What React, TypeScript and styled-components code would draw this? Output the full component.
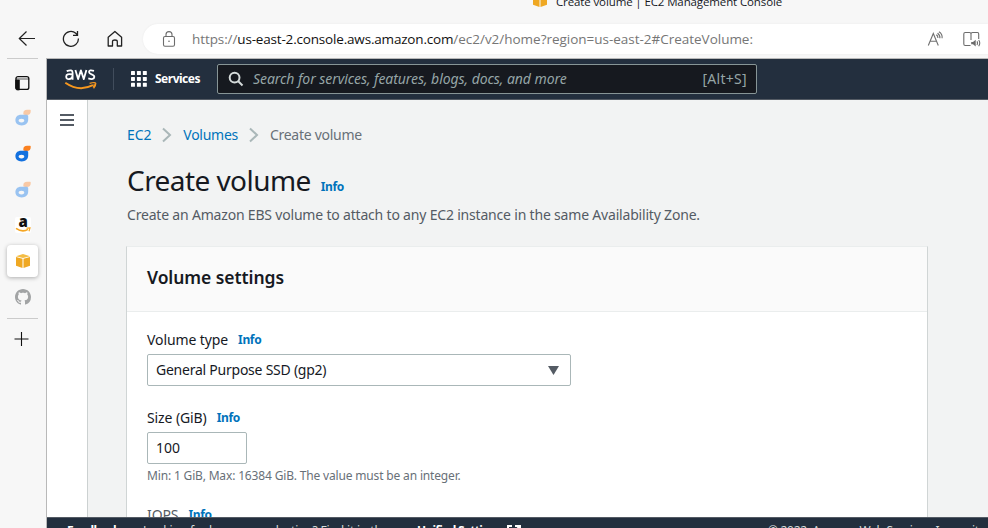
import React from 'react';
import styled, { createGlobalStyle } from 'styled-components';

const Global = createGlobalStyle`
  * { box-sizing: border-box; }
  html, body { margin: 0; padding: 0; overflow: hidden; }
  body { background: #f7f7f7; font-family: 'Noto Sans', 'Open Sans', sans-serif; }
  svg { display: block; flex: none; }
`;

const Window = styled.div`
  width: 988px;
  height: 528px;
  overflow: hidden;
  display: grid;
  grid-template-rows: 24px 34px 470px;
  background: #f7f7f7;
`;

const Txt = styled.span<{ $size?: number; $ls?: number; $color?: string; $weight?: number; $italic?: boolean; $font?: string }>`
  display: block;
  white-space: nowrap;
  font-size: ${p => p.$size ?? 14}px;
  letter-spacing: ${p => p.$ls ?? 0}px;
  color: ${p => p.$color ?? '#16191f'};
  font-weight: ${p => p.$weight ?? 400};
  font-style: ${p => (p.$italic ? 'italic' : 'normal')};
  font-family: ${p => (p.$font ? `'${p.$font}', sans-serif` : 'inherit')};
  line-height: 20px;
`;

const TabStrip = styled.div`
  display: flex;
  align-items: flex-start;
  gap: 8px;
  padding-left: 532px;
  overflow: hidden;
  & > svg { margin-top: -8px; }
  & > span { margin-top: -8px; }
`;

const Toolbar = styled.div`
  display: grid;
  grid-template-columns: 143px 845px;
`;

const NavButtons = styled.div`
  display: flex;
  gap: 26px;
  padding: 6px 0 0 18px;
`;

const AddressBar = styled.div`
  display: flex;
  align-items: center;
  height: 30px;
  padding-left: 19px;
  border-radius: 15px 0 0 15px;
  background: #fff;
  box-shadow: 0 0 2px #e8e8e8;
`;

const Url = styled.div`
  display: flex;
  margin-left: 16px;
  width: 735px;
`;

const ReaderIcons = styled.div`
  display: flex;
  gap: 19px;
`;

const Body = styled.div`
  display: grid;
  grid-template-columns: 46px 942px;
`;

const VerticalTabs = styled.div`
  display: flex;
  flex-direction: column;
  align-items: center;
`;

const Divider = styled.div<{ $mt?: number }>`
  width: 31px;
  height: 1px;
  flex: none;
  margin: ${p => p.$mt ?? 0}px 1px 0 0;
  background: #cbcbcb;
`;

const TabCell = styled.div<{ $active?: boolean; $h?: number; $mt?: number }>`
  width: 31px;
  height: ${p => p.$h ?? 32}px;
  margin: ${p => p.$mt ?? 2}px 1px 2px 0;
  display: flex;
  flex: none;
  align-items: center;
  justify-content: center;
  border-radius: 4px;
  background: ${p => (p.$active ? '#fff' : 'transparent')};
  box-shadow: ${p => (p.$active ? '0 1px 4px rgba(0,0,0,.3)' : 'none')};
`;

const Page = styled.div`
  display: grid;
  grid-template-rows: 41px 417px 11px;
  border-left: 1px solid #b9b9b9;
  border-top: 1px solid #b9b9b9;
  height: 470px;
  overflow: hidden;
`;

const AwsHeader = styled.div`
  display: flex;
  align-items: center;
  padding-left: 17px;
  background: #232f3e;
  border-bottom: 1px solid #545b64;
`;

const HeaderRule = styled.div`
  width: 1px;
  height: 22px;
  margin: 0 17px 0 15px;
  background: #414d5c;
`;

const Services = styled.div`
  display: flex;
  align-items: center;
  gap: 8px;
  width: 86px;
`;

const SearchBox = styled.div`
  display: flex;
  align-items: center;
  width: 540px;
  height: 30px;
  padding: 0 9px 0 10px;
  border: 1px solid #879596;
  border-radius: 2px;
  background: #16191f;
  & > svg { margin-right: 9px; }
  & > span:last-child { margin-left: auto; }
`;

const Main = styled.div`
  display: grid;
  grid-template-columns: 41px 900px;
  background: #f2f3f3;
  overflow: hidden;
`;

const Rail = styled.div`
  background: #fff;
  border-right: 1px solid #ccd1d1;
  padding: 14px 0 0 13px;
`;

const Content = styled.div`
  padding: 25px 0 0 39px;
`;

const Crumbs = styled.div`
  display: flex;
  align-items: center;
  height: 20px;
  & > svg { margin: 0 11px; }
`;

const TitleRow = styled.div`
  display: flex;
  align-items: baseline;
  gap: 10px;
  height: 36px;
  margin-top: 17px;
  & > span:first-child { line-height: 36px; }
`;

const Description = styled.div`
  margin-top: 7px;
`;

const Panel = styled.section`
  width: 802px;
  height: 330px;
  margin-top: 21px;
  margin-left: -1px;
  border: 1px solid #d0d5d5;
  border-top-color: #eaeded;
  background: #fff;
`;

const PanelHeader = styled.div`
  display: flex;
  align-items: center;
  height: 65px;
  padding: 0 20px 4px;
  background: #fafafa;
  border-bottom: 1px solid #eaeded;
`;

const Form = styled.div`
  padding: 18px 20px 0;
`;

const Label = styled.div`
  display: flex;
  align-items: center;
  gap: 10px;
  height: 20px;
`;

const Control = styled.div<{ $w: number }>`
  display: flex;
  align-items: center;
  justify-content: space-between;
  width: ${p => p.$w}px;
  height: 32px;
  margin: 4px 0 2px;
  padding: 0 11px 0 8px;
  border: 1px solid #aab7b8;
  border-radius: 2px;
  background: #fff;
`;

const Field = styled.div<{ $gap: number }>`
  margin-bottom: ${p => p.$gap}px;
`;

const Footer = styled.div`
  display: flex;
  background: #232f3e;
  border-top: 1px solid #545b64;
  overflow: hidden;
  padding: 3px 0 0 20px;
  & > svg { margin-top: 4px; }
`;

const FooterItem = styled.div<{ $w: number }>`
  width: ${p => p.$w}px;
  flex: none;
`;

const LINK = '#0073bb';
const Info = () => <Txt $size={12} $weight={700} $color={LINK} $ls={-0.35}>Info</Txt>;

const Cube = ({ size = 16 }: { size?: number }) => (
  <svg width={size} height={size} viewBox="0 0 16 16">
    <path d="M8 1 15 3.2 8 5 1 3.2Z" fill="#f4bd45" />
    <path d="M1 4.1 7.5 5.7V15L1 12.8ZM15 4.1 8.5 5.7V15L15 12.8Z" fill="#efa823" />
  </svg>
);

const Drop = ({ faded = false }: { faded?: boolean }) => (
  <svg width="16" height="17" viewBox="0 0 16 17">
    <path d="M8.3 4.8C8.3 1.8 9.6.8 12 .8H15.2L15.8 1.4C15.8 4.6 14.6 6 11.8 6 9.6 6 8.3 6 8.3 4.8Z" fill={faded ? '#f9c9a5' : '#fb8120'} />
    <path fillRule="evenodd" d="M6 5.8H12.2L13.2 6.8V10.6C13.2 14.2 10.6 16.4 6.7 16.4 2.9 16.4.4 14.3.4 11.2.4 8 2.6 5.8 6 5.8ZM6.5 9.7C4.5 9.7 3.6 10.7 3.6 11.6S4.5 13.4 6.5 13.4 9.3 12.6 9.3 11.6 8.5 9.7 6.5 9.7Z" fill={faded ? '#99c3f1' : '#1371df'} />
  </svg>
);

const Chevron = () => (
  <svg width="10" height="16" viewBox="0 0 10 16" fill="none" stroke="#aab7b8" strokeWidth="2">
    <path d="M1 1.5 8 8 1 14.5" />
  </svg>
);

const BackIcon = () => (
  <svg width="18" height="18" viewBox="0 0 18 18" fill="none" stroke="#222" strokeWidth="1.2">
    <path d="M17 8.5H1.5M8.5 1.5 1.3 8.5 8.5 15.5" />
  </svg>
);

const ReloadIcon = () => (
  <svg width="18" height="18" viewBox="0 0 18 18" fill="none" stroke="#222" strokeWidth="1.3">
    <path d="M16.4 8.5A7.5 7.5 0 1 1 13.8 3.2L15.5 5M15.5 1V5.3H11" />
  </svg>
);

const HomeIcon = () => (
  <svg width="17" height="18" viewBox="0 0 17 18" fill="none" stroke="#222" strokeWidth="1.3" strokeLinejoin="round">
    <path d="M2.2 7.3 8.9 1.5 15.6 7.3V16H11.3V11.5Q11.3 10 8.9 10T6.5 11.5V16H2.2Z" />
  </svg>
);

const LockIcon = () => (
  <svg width="14" height="18" viewBox="0 0 14 18" fill="none" stroke="#6c6c6c" strokeWidth="1.1">
    <rect x="1.5" y="6.5" width="11" height="9.8" rx="1.5" />
    <path d="M4 6.5V4.6Q4 1.6 7 1.6T10 4.6V6.5" />
    <circle cx="7" cy="11.3" r=".8" fill="#6c6c6c" stroke="none" />
  </svg>
);

const ReadAloudIcon = () => (
  <svg width="17" height="16" viewBox="0 0 17 16" fill="none" stroke="#707070" strokeWidth="1.1">
    <path d="M1.3 14.5 6.3 2.5 11.3 14.5M3.2 10.3H9.4M9.3 3.8Q11.1 5 10.9 7M10.5 2.2Q13.3 4 12.9 7.2M11.9.8Q15.6 3 15.1 7.2" />
  </svg>
);

const ReaderIcon = () => (
  <svg width="18" height="17" viewBox="0 0 18 17" fill="none" stroke="#6c6c6c" strokeWidth="1.1">
    <path d="M7.5 14.5H2.2Q.8 14.5.8 13V3Q.8 1.5 2.2 1.5H6.5Q8 1.5 8 3V9M8 3Q8 1.5 9.5 1.5H14.5Q15.7 1.5 15.7 3V8" />
    <path d="M8.2 11H10L12.7 8.8V15.5L10 13.3H8.2Z" fill="#6c6c6c" stroke="none" />
    <path d="M14 10.4Q15 12 14 13.9M15.7 9Q17.8 12 15.7 15.2" />
  </svg>
);

const AwsLogo = () => (
  <svg width="34" height="28" viewBox="0 0 34 28" fill="none">
    <g stroke="#fff" strokeWidth="1.8" strokeLinejoin="round">
      <path d="M2.7 6.2Q8.6 3.8 8.6 7.7V14.8M8.4 9.5Q2.2 8.4 2.2 11.6 2.3 14.4 5 14.2 8 13.8 8.6 11" />
      <path d="M11.4 4.9 14.1 14.1 16.9 5.4 19.8 14.1 22.4 4.9" />
      <path d="M30 5.8Q25 4.4 25 7.1C25 9.9 30.3 8.9 30.3 11.8Q30 15.2 24.3 13.4" />
    </g>
    <path d="M1.3 17.8Q15 27.2 29 20.2" stroke="#f7981f" strokeWidth="2" />
    <path d="M25.6 18.4Q31 16.8 31.8 18.2 32 20.5 29.6 23.4M29.2 22.6Q30.4 20.3 30.2 18.6" stroke="#f7981f" strokeWidth="1.2" />
  </svg>
);

const GridIcon = () => (
  <svg width="16" height="16" viewBox="0 0 17 17" fill="#fff">
    {[0, 6.3, 12.6].map(y => [0, 6.3, 12.6].map(x => <rect key={`${x}-${y}`} x={x} y={y} width="4.2" height="4.2" rx=".6" />))}
  </svg>
);

const SearchIcon = () => (
  <svg width="16" height="16" viewBox="0 0 16 16" fill="none" stroke="#d5dbdb" strokeWidth="2">
    <circle cx="6.6" cy="6.6" r="4.9" />
    <path d="M10 10 14.5 14.5" />
  </svg>
);

const TabsIcon = () => (
  <svg width="16" height="16" viewBox="0 0 16 16">
    <rect x="1" y="1.6" width="12.8" height="12.8" rx="2" fill="none" stroke="#111" strokeWidth="1.3" />
    <path d="M.6 4H14.2M.6 5H4.4V15H2.4Q.6 15 .6 13Z" stroke="#111" strokeWidth=".7" fill="#111" />
  </svg>
);

const AmazonIcon = () => (
  <svg width="16" height="17" viewBox="0 0 16 17">
    <rect width="16" height="16" rx="2" fill="#fff" />
    <text x="3.5" y="10.2" fontFamily="Open Sans" fontWeight="800" fontSize="15" fill="#111">a</text>
    <path d="M1 11.3Q7.5 15.8 13 12.3" fill="none" stroke="#f5a623" strokeWidth="1.6" />
    <path d="M11.5 11.2 15 11 14 14.2" fill="none" stroke="#f5a623" strokeWidth="1.2" />
  </svg>
);

const GithubIcon = () => (
  <svg width="16" height="16" viewBox="0 0 16 16" fill="#a2a4a5">
    <path d="M8 0C3.58 0 0 3.58 0 8c0 3.54 2.29 6.53 5.47 7.59.4.07.55-.17.55-.38 0-.19-.01-.82-.01-1.49-2.01.37-2.53-.49-2.69-.94-.09-.23-.48-.94-.82-1.13-.28-.15-.68-.52-.01-.53.63-.01 1.08.58 1.23.82.72 1.21 1.87.87 2.33.66.07-.52.28-.87.51-1.07-1.78-.2-3.64-.89-3.64-3.95 0-.87.31-1.59.82-2.15-.08-.2-.36-1.02.08-2.12 0 0 .67-.21 2.2.82.64-.18 1.32-.27 2-.27s1.36.09 2 .27c1.53-1.04 2.2-.82 2.2-.82.44 1.1.16 1.92.08 2.12.51.56.82 1.27.82 2.15 0 3.07-1.87 3.75-3.65 3.95.29.25.54.73.54 1.48 0 1.07-.01 1.93-.01 2.2 0 .21.15.46.55.38A8.01 8.01 0 0 0 16 8c0-4.42-3.58-8-8-8Z" />
  </svg>
);

const PlusIcon = () => (
  <svg width="17" height="15" viewBox="0 0 17 15" stroke="#111" strokeWidth="1.1">
    <path d="M.5 7H14.5M7.5 0V14" />
  </svg>
);

const MenuIcon = () => (
  <svg width="14" height="12" viewBox="0 0 14 12" fill="#545b64">
    <path d="M0 0H14V2H0ZM0 5H14V7H0ZM0 10H14V12H0Z" />
  </svg>
);

const ExternalIcon = () => (
  <svg width="14" height="14" viewBox="0 0 14 14" fill="none" stroke="#fff" strokeWidth="2">
    <path d="M5 1H1V13H13V9M8 1H13V6M13 1 6 8" />
  </svg>
);

export default function App() {
  return (
    <>
      <Global />
      <Window>
        <TabStrip>
          <Cube />
          <Txt $size={11.5} $font="Open Sans" $ls={-0.12}>Create volume | EC2 Management Console</Txt>
        </TabStrip>
        <Toolbar>
          <NavButtons><BackIcon /><ReloadIcon /><HomeIcon /></NavButtons>
          <AddressBar>
            <LockIcon />
            <Url>
              <Txt $size={13.5} $ls={-0.09} $font="Open Sans" $color="#767676">https://</Txt>
              <Txt $size={13.5} $ls={-0.18} $font="Open Sans" $color="#111">us-east-2.console.aws.amazon.com</Txt>
              <Txt $size={13.5} $ls={-0.02} $font="Open Sans" $color="#767676">/ec2/v2/home?region=us-east-2#CreateVolume:</Txt>
            </Url>
            <ReaderIcons><ReadAloudIcon /><ReaderIcon /></ReaderIcons>
          </AddressBar>
        </Toolbar>
        <Body>
          <VerticalTabs>
            <Divider />
            <TabCell $h={28} $mt={10}><TabsIcon /></TabCell>
            <TabCell><Drop faded /></TabCell>
            <TabCell><Drop /></TabCell>
            <TabCell><Drop faded /></TabCell>
            <TabCell><AmazonIcon /></TabCell>
            <TabCell $active><Cube /></TabCell>
            <TabCell><GithubIcon /></TabCell>
            <Divider $mt={3} />
            <TabCell $h={36}><PlusIcon /></TabCell>
          </VerticalTabs>
          <Page>
            <AwsHeader>
              <AwsLogo />
              <HeaderRule />
              <Services>
                <GridIcon />
                <Txt $size={12} $weight={700} $ls={-0.5} $color="#fff">Services</Txt>
              </Services>
              <SearchBox>
                <SearchIcon />
                <Txt $italic $ls={-0.06} $color="#95a5a6">Search for services, features, blogs, docs, and more</Txt>
                <Txt $ls={0.3} $color="#95a5a6">[Alt+S]</Txt>
              </SearchBox>
            </AwsHeader>
            <Main>
              <Rail><MenuIcon /></Rail>
              <Content>
                <Crumbs>
                  <Txt $color={LINK} $ls={-0.1}>EC2</Txt>
                  <Chevron />
                  <Txt $color={LINK} $ls={-0.28}>Volumes</Txt>
                  <Chevron />
                  <Txt $color="#687078" $ls={-0.28}>Create volume</Txt>
                </Crumbs>
                <TitleRow><Txt $size={28} $ls={-0.56}>Create volume</Txt><Info /></TitleRow>
                <Description><Txt $color="#545b64" $ls={-0.19}>Create an Amazon EBS volume to attach to any EC2 instance in the same Availability Zone.</Txt></Description>
                <Panel>
                  <PanelHeader><Txt $size={17.5} $weight={600} $ls={-0.06}>Volume settings</Txt></PanelHeader>
                  <Form>
                    <Field $gap={22}>
                      <Label><Txt $ls={-0.1}>Volume type</Txt><Info /></Label>
                      <Control $w={424}>
                        <Txt $ls={-0.24}>General Purpose SSD (gp2)</Txt>
                        <svg width="11" height="9" viewBox="0 0 11 9"><path d="M0 0H11L5.5 9Z" fill="#545b64" /></svg>
                      </Control>
                    </Field>
                    <Field $gap={19}>
                      <Label><Txt $ls={-0.1}>Size (GiB)</Txt><Info /></Label>
                      <Control $w={100}><Txt>100</Txt></Control>
                      <Txt $size={12} $ls={-0.16} $color="#687078">Min: 1 GiB, Max: 16384 GiB. The value must be an integer.</Txt>
                    </Field>
                    <Label><Txt $color="#545b64" $ls={-0.1}>IOPS</Txt><Info /></Label>
                  </Form>
                </Panel>
              </Content>
            </Main>
            <Footer>
              <FooterItem $w={76}><Txt $size={12} $weight={700} $ls={-0.5} $color="#fff">Feedback</Txt></FooterItem>
              <FooterItem $w={274}><Txt $size={12} $ls={-0.15} $color="#d5dbdb">Looking for language selection? Find it in the new</Txt></FooterItem>
              <FooterItem $w={90}><Txt $size={12} $weight={700} $ls={-0.7} $color="#fff">Unified Settings</Txt></FooterItem>
              <ExternalIcon />
              <FooterItem $w={247} />
              <Txt $size={12} $ls={-0.3} $color="#d5dbdb">© 2022, Amazon Web Services, Inc. or its affiliates.</Txt>
            </Footer>
          </Page>
        </Body>
      </Window>
    </>
  );
}
